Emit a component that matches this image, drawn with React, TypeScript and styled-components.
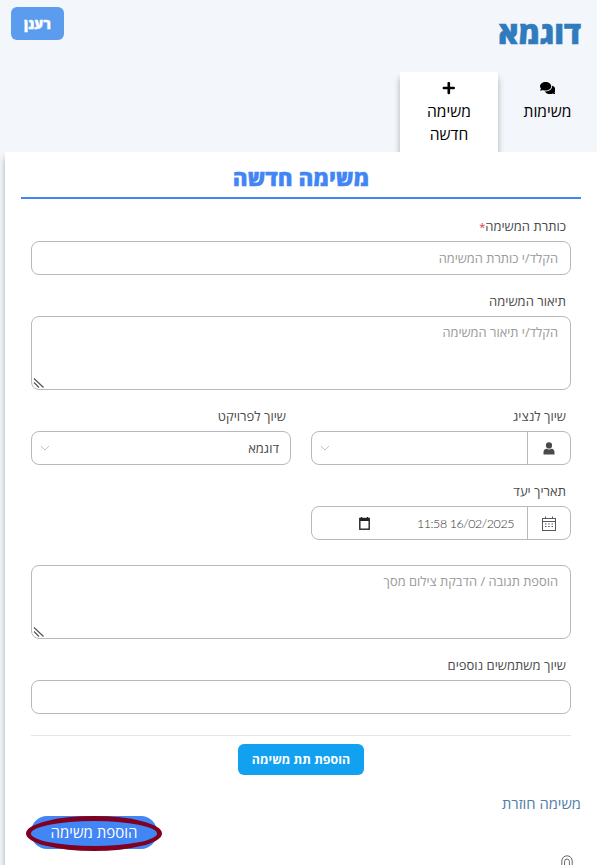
import React from 'react'
import styled, { createGlobalStyle } from 'styled-components'
import { FaComments, FaPlus } from 'react-icons/fa'

const GlobalStyle = createGlobalStyle`
  html, body {
    margin: 0;
    height: 100%;
    overflow: hidden;
    background: #f3f6fa;
  }
  body {
    font-family: "Open Sans", "Liberation Sans", sans-serif;
    color: #4a4a4a;
  }
  * { box-sizing: border-box; }
`

const Page = styled.div`
  direction: rtl;
  height: 865px;
  overflow: hidden;
`

const Header = styled.header`
  display: flex;
  justify-content: space-between;
  align-items: flex-start;
  height: 72px;
  padding: 7px 16px 0 11px;
`

const Brand = styled.h1`
  margin: 9px 0 0;
  font-size: 30.5px;
  line-height: 32px;
  font-weight: 800;
  color: #2f7bbd;
  -webkit-text-stroke: 0.5px #2f7bbd;
`

const RefreshButton = styled.button`
  width: 53px;
  height: 33px;
  border: 0;
  border-radius: 6px;
  background: #5c9cee;
  color: #fff;
  font: inherit;
  font-size: 14px;
  font-weight: 800;
  -webkit-text-stroke: 0.3px #fff;
`

const Tabs = styled.nav`
  display: flex;
  height: 80px;
`

const Tab = styled.div<{ $active?: boolean }>`
  width: 99px;
  padding-top: 9px;
  display: flex;
  flex-direction: column;
  align-items: center;
  text-align: center;
  color: #000;
  font-size: 15.6px;
  line-height: 23px;
  ${({ $active }) => $active && `
    width: 98px;
    background: #fff;
    box-shadow: 0 6px 6px rgba(0, 0, 0, 0.3);
  `}
  svg { height: 14px; margin-bottom: 5px; color: #000; }
`

const TabLabel = styled.span<{ $narrow?: boolean }>`
  width: ${({ $narrow }) => ($narrow ? '60px' : 'auto')};
`

const Card = styled.main`
  position: relative;
  margin-left: 5px;
  height: 713px;
  padding: 10px 16px 0 16px;
  background: #fff;
  box-shadow: 0 6px 6px rgba(0, 0, 0, 0.3);
`

const CardTitle = styled.h2`
  margin: 0 0 18px;
  height: 37px;
  border-bottom: 2px solid #4285f4;
  color: #4285f4;
  text-align: center;
  font-size: 22.5px;
  line-height: 32px;
  font-weight: 800;
  -webkit-text-stroke: 0.3px #4285f4;
`

const Form = styled.form`
  padding: 0 10px;
`

const Field = styled.div<{ $gap?: number }>`
  margin-bottom: ${({ $gap }) => $gap ?? 17}px;
`

const Label = styled.label`
  display: block;
  height: 24px;
  padding-right: 5px;
  font-size: 13px;
  line-height: 18px;
  color: #4a4a4a;
`

const Required = styled.span`
  color: #d9363e;
  font-size: 11px;
`

const TextInput = styled.input`
  display: block;
  width: 100%;
  height: 34px;
  padding: 0 12px;
  border: 1px solid #b9b9b9;
  border-radius: 8px;
  background: #fff;
  font: inherit;
  font-size: 12.85px;
  color: #4a4a4a;
  &::placeholder { color: #9a9a9a; }
`

const TextAreaBox = styled.div`
  position: relative;
`

const TextArea = styled.textarea`
  display: block;
  width: 100%;
  height: 74px;
  padding: 6px 12px;
  border: 1px solid #b9b9b9;
  border-radius: 8px;
  font: inherit;
  font-size: 12.85px;
  resize: none;
  &::placeholder { color: #9a9a9a; }
`

const ResizeGrip = styled.svg`
  position: absolute;
  left: 2px;
  bottom: 2px;
`

const Columns = styled.div`
  display: grid;
  grid-template-columns: 260px 260px;
  gap: 20px;
  margin-bottom: 17px;
`

const InputGroup = styled.div`
  display: flex;
  width: 260px;
  height: 34px;
  border: 1px solid #b9b9b9;
  border-radius: 8px;
  background: #fff;
`

const GroupAddon = styled.span`
  flex: none;
  width: 43px;
  display: flex;
  align-items: center;
  justify-content: center;
  border-left: 1px solid #b9b9b9;
`

const GroupValue = styled.div`
  flex: 1;
  display: flex;
  align-items: center;
  justify-content: space-between;
  padding: 0 11px 0 8px;
  font-size: 13px;
  color: #4a4a4a;
`

const DateValue = styled.div`
  flex: 1;
  display: flex;
  align-items: center;
  gap: 47px;
  padding-right: 13px;
  direction: ltr;
  flex-direction: row-reverse;
  justify-content: flex-start;
  font-family: "Lato", "Roboto", sans-serif;
  font-size: 12.5px;
  letter-spacing: -0.45px;
  font-weight: 300;
  color: #333;
`

const Chevron = () => (
  <svg width="10" height="6" viewBox="0 0 10 6" fill="none" stroke="#c4c4c4" strokeWidth="1">
    <path d="M1 1l4 4 4-4" />
  </svg>
)

const UserIcon = () => (
  <svg width="12" height="13" viewBox="0 0 12 13" fill="#4a4a4a">
    <circle cx="6" cy="3.4" r="3.1" />
    <path d="M0.5 12.6v-2.4c0-2.2 1.4-3.3 3-3.5 1.2 0.9 3.8 0.9 5 0 1.6 0.2 3 1.3 3 3.5v2.4z" />
  </svg>
)

const CalendarThin = () => (
  <svg width="14" height="15" viewBox="0 0 14 15" fill="none" stroke="#5a5560" strokeWidth="1">
    <rect x="0.5" y="2.5" width="13" height="12" />
    <path d="M0.5 5.5h13M3.5 0.5v2M10.5 0.5v2" />
    <path d="M3 8h1.5M6.2 8h1.5M9.5 8h1.5M3 10.5h1.5M6.2 10.5h1.5M9.5 10.5h1.5" />
  </svg>
)

const NativePickerIcon = () => (
  <svg width="11" height="13" viewBox="0 0 11 13" fill="none">
    <path d="M2.5 0v2M8.5 0v2" stroke="#222" strokeWidth="1.4" />
    <rect x="0.8" y="1.5" width="9.4" height="10.7" stroke="#222" strokeWidth="1.4" />
    <rect x="0.8" y="1.5" width="9.4" height="2.5" fill="#222" />
  </svg>
)

const PaperclipIcon = () => (
  <svg width="12" height="14" viewBox="0 0 12 14" fill="none" stroke="#666" strokeWidth="1">
    <path d="M0.8 14V6a5.2 5.2 0 0 1 10.4 0v8" />
    <path d="M3.6 14V6.4a2.4 2.4 0 0 1 4.8 0V14" />
  </svg>
)

const Grip = () => (
  <ResizeGrip width="11" height="10" viewBox="0 0 11 10" fill="none" stroke="#555" strokeWidth="1.2">
    <path d="M1 0.5l9.5 9M1 4.5l5 5" />
  </ResizeGrip>
)

const Divider = styled.hr`
  margin: 21px 0 8px;
  border: 0;
  border-top: 1px solid #e3e5e8;
`

const SubTaskRow = styled.div`
  display: flex;
  justify-content: center;
`

const SubTaskButton = styled.button`
  width: 126px;
  height: 31px;
  border: 0;
  border-radius: 6px;
  background: #12a0f0;
  color: #fff;
  font: inherit;
  font-size: 12.4px;
  font-weight: 700;
`

const RecurringLink = styled.div`
  margin: 19px -10px 0 0;
  height: 22px;
  font-size: 14.75px;
  line-height: 18px;
  color: #4f7ea8;
`

const SubmitRow = styled.div`
  display: flex;
  justify-content: flex-end;
`

const SubmitButton = styled.button`
  position: relative;
  width: 126px;
  height: 33px;
  padding: 0 0 2px;
  border: 0;
  border-radius: 16px;
  background: #4285f4;
  color: #fff;
  font: inherit;
  font-size: 15px;
  &::after {
    content: '';
    position: absolute;
    left: -5px;
    right: -5px;
    top: 0;
    bottom: -2px;
    border: 5px solid #800020;
    border-radius: 50%;
  }
`

const Clip = styled.div`
  position: absolute;
  right: 24px;
  top: 703px;
  line-height: 0;
`

export default function App() {
  return (
    <Page>
      <GlobalStyle />
      <Header>
        <Brand>דוגמא</Brand>
        <RefreshButton>רענן</RefreshButton>
      </Header>
      <Tabs>
        <Tab>
          <FaComments />
          <TabLabel>משימות</TabLabel>
        </Tab>
        <Tab $active>
          <FaPlus />
          <TabLabel $narrow>משימה חדשה</TabLabel>
        </Tab>
      </Tabs>
      <Card>
        <CardTitle>משימה חדשה</CardTitle>
        <Form>
          <Field>
            <Label>כותרת המשימה<Required>*</Required></Label>
            <TextInput placeholder="הקלד/י כותרת המשימה" />
          </Field>
          <Field>
            <Label>תיאור המשימה</Label>
            <TextAreaBox>
              <TextArea placeholder="הקלד/י תיאור המשימה" />
              <Grip />
            </TextAreaBox>
          </Field>
          <Columns>
            <div>
              <Label>שיוך לנציג</Label>
              <InputGroup>
                <GroupAddon><UserIcon /></GroupAddon>
                <GroupValue><span /><Chevron /></GroupValue>
              </InputGroup>
            </div>
            <div>
              <Label>שיוך לפרויקט</Label>
              <InputGroup>
                <GroupValue>דוגמא<Chevron /></GroupValue>
              </InputGroup>
            </div>
          </Columns>
          <Field $gap={25}>
            <Label>תאריך יעד</Label>
            <InputGroup>
              <GroupAddon><CalendarThin /></GroupAddon>
              <DateValue>
                <span>11:58 16/02/2025</span>
                <NativePickerIcon />
              </DateValue>
            </InputGroup>
          </Field>
          <Field>
            <TextAreaBox>
              <TextArea placeholder="הוספת תגובה / הדבקת צילום מסך" />
              <Grip />
            </TextAreaBox>
          </Field>
          <Field $gap={0}>
            <Label>שיוך משתמשים נוספים</Label>
            <TextInput />
          </Field>
          <Divider />
          <SubTaskRow>
            <SubTaskButton type="button">הוספת תת משימה</SubTaskButton>
          </SubTaskRow>
          <RecurringLink>משימה חוזרת</RecurringLink>
          <SubmitRow>
            <SubmitButton type="button">הוספת משימה</SubmitButton>
          </SubmitRow>
        </Form>
        <Clip><PaperclipIcon /></Clip>
      </Card>
    </Page>
  )
}
